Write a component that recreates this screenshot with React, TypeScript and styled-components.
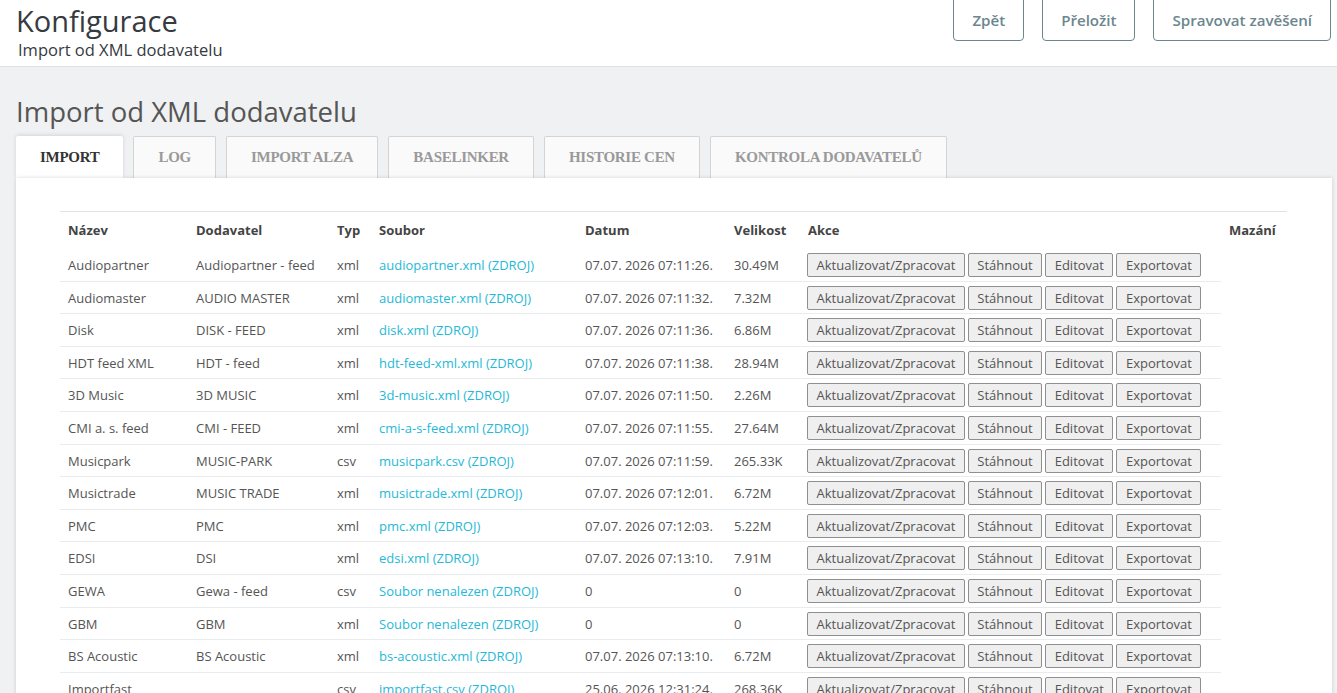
import React from "react";
import styled, { createGlobalStyle } from "styled-components";

const Global = createGlobalStyle`
  html, body { margin: 0; padding: 0; }
  *, *::before, *::after { box-sizing: border-box; }
  body {
    background: #eff1f2;
    font-family: "Open Sans", "Noto Sans", sans-serif;
    color: #555;
    overflow: hidden;
  }
`;

const Page = styled.div`
  width: 1337px;
  height: 693px;
  overflow: hidden;
`;

const Header = styled.header`
  background: #fff;
  height: 67px;
  border-bottom: 1px solid #dfe3e6;
  display: flex;
  justify-content: space-between;
  align-items: flex-start;
  padding: 0 6px 0 16px;
`;

const TitleBlock = styled.div`
  display: flex;
  flex-direction: column;
  padding-top: 2px;
`;

const Title = styled.h1`
  margin: 0;
  font-size: 29px;
  font-weight: 400;
  line-height: 38px;
  color: #363a41;
`;

const Subtitle = styled.div`
  font-size: 16.5px;
  line-height: 20px;
  color: #363a41;
  margin-left: 2px;
`;

const Toolbar = styled.div`
  display: flex;
  gap: 18px;
  margin-top: -4px;
`;

const ToolButton = styled.button`
  height: 45px;
  padding: 2px 18px 0;
  border: 1px solid #6c868e;
  border-radius: 4px;
  background: #fff;
  color: #6c868e;
  font-family: "Open Sans", sans-serif;
  font-weight: 600;
  font-size: 15.1px;
`;

const Main = styled.main`
  padding: 0 5px 0 16px;
`;

const PageHeading = styled.h2`
  margin: 0;
  padding-top: 26px;
  font-size: 27.5px;
  line-height: 38px;
  font-weight: 400;
  color: #555;
`;

const Tabs = styled.nav`
  display: flex;
  gap: 10px;
  margin-top: 5px;
  height: 42px;
  position: relative;
  z-index: 0;
`;

const Tab = styled.div<{ $active?: boolean }>`
  height: 42px;
  padding: 0 24px 0;
  display: flex;
  align-items: center;
  justify-content: center;
  font-family: "Liberation Serif", "Times New Roman", serif;
  font-weight: 700;
  font-size: 15px;
  letter-spacing: -0.28px;
  text-transform: uppercase;
  border: ${(p) => (p.$active ? "none" : "1px solid #d4d4d4")};
  border-bottom: none;
  background: ${(p) => (p.$active ? "#fff" : "#fafafa")};
  color: ${(p) => (p.$active ? "#333" : "#999")};
  border-radius: 2px 2px 0 0;
  box-shadow: ${(p) => (p.$active ? "0 -1px 4px rgba(0,0,0,0.12)" : "none")};
  position: relative;
  z-index: ${(p) => (p.$active ? 2 : 0)};
`;

const Panel = styled.section`
  width: 1316px;
  background: #fff;
  box-shadow: 0 0 4px rgba(0, 0, 0, 0.15);
  padding: 33px 45px 40px 44px;
  position: relative;
  z-index: 1;
`;

const Table = styled.table`
  width: 1227px;
  border-collapse: collapse;
  table-layout: fixed;
  border-top: 1px solid #dfe3e6;
  font-size: 13px;
`;

const Th = styled.th`
  text-align: left;
  font-weight: 700;
  color: #444;
  padding: 0 8px;
  height: 37px;
`;

const Td = styled.td<{ $last?: boolean }>`
  padding: 4px 8px 3.6px;
  height: 32.6px;
  border-bottom: ${(p) => (p.$last ? "none" : "1px solid #e9ecee")};
  white-space: nowrap;
  color: #555;
`;

const Link = styled.a`
  color: #25b9d7;
  text-decoration: none;
`;

const Actions = styled.div`
  display: flex;
  gap: 3px;
  margin-left: -1px;
`;

const ActionButton = styled.button`
  height: 24px;
  padding: 0 8.5px;
  background: #efefef;
  border: 1px solid #8f8f8f;
  border-radius: 2px;
  font-family: "Open Sans", sans-serif;
  font-size: 13px;
  color: #555;
  line-height: 20px;
`;

type Row = [string, string, string, string, string, string];

const rows: Row[] = [
  ["Audiopartner", "Audiopartner - feed", "xml", "audiopartner.xml (ZDROJ)", "07.07. 2026 07:11:26.", "30.49M"],
  ["Audiomaster", "AUDIO MASTER", "xml", "audiomaster.xml (ZDROJ)", "07.07. 2026 07:11:32.", "7.32M"],
  ["Disk", "DISK - FEED", "xml", "disk.xml (ZDROJ)", "07.07. 2026 07:11:36.", "6.86M"],
  ["HDT feed XML", "HDT - feed", "xml", "hdt-feed-xml.xml (ZDROJ)", "07.07. 2026 07:11:38.", "28.94M"],
  ["3D Music", "3D MUSIC", "xml", "3d-music.xml (ZDROJ)", "07.07. 2026 07:11:50.", "2.26M"],
  ["CMI a. s. feed", "CMI - FEED", "xml", "cmi-a-s-feed.xml (ZDROJ)", "07.07. 2026 07:11:55.", "27.64M"],
  ["Musicpark", "MUSIC-PARK", "csv", "musicpark.csv (ZDROJ)", "07.07. 2026 07:11:59.", "265.33K"],
  ["Musictrade", "MUSIC TRADE", "xml", "musictrade.xml (ZDROJ)", "07.07. 2026 07:12:01.", "6.72M"],
  ["PMC", "PMC", "xml", "pmc.xml (ZDROJ)", "07.07. 2026 07:12:03.", "5.22M"],
  ["EDSI", "DSI", "xml", "edsi.xml (ZDROJ)", "07.07. 2026 07:13:10.", "7.91M"],
  ["GEWA", "Gewa - feed", "csv", "Soubor nenalezen (ZDROJ)", "0", "0"],
  ["GBM", "GBM", "xml", "Soubor nenalezen (ZDROJ)", "0", "0"],
  ["BS Acoustic", "BS Acoustic", "xml", "bs-acoustic.xml (ZDROJ)", "07.07. 2026 07:13:10.", "6.72M"],
  ["Importfast", "", "csv", "importfast.csv (ZDROJ)", "25.06. 2026 12:31:24.", "268.36K"],
];

const columns: [string, number][] = [
  ["Název", 128],
  ["Dodavatel", 141],
  ["Typ", 42],
  ["Soubor", 206],
  ["Datum", 149],
  ["Velikost", 74],
  ["Akce", 421],
  ["Mazání", 66],
];

const tabs = ["Import", "Log", "Import Alza", "Baselinker", "Historie cen", "Kontrola dodavatelů"];

export default function App() {
  return (
    <Page>
      <Global />
      <Header>
        <TitleBlock>
          <Title>Konfigurace</Title>
          <Subtitle>Import od XML dodavatelu</Subtitle>
        </TitleBlock>
        <Toolbar>
          <ToolButton>Zpět</ToolButton>
          <ToolButton>Přeložit</ToolButton>
          <ToolButton>Spravovat zavěšení</ToolButton>
        </Toolbar>
      </Header>
      <Main>
        <PageHeading>Import od XML dodavatelu</PageHeading>
        <Tabs>
          {tabs.map((t, i) => (
            <Tab key={t} $active={i === 0}>
              {t}
            </Tab>
          ))}
        </Tabs>
        <Panel>
          <Table>
            <colgroup>
              {columns.map(([c, w]) => (
                <col key={c} style={{ width: w }} />
              ))}
            </colgroup>
            <thead>
              <tr>
                {columns.map(([c]) => (
                  <Th key={c}>{c}</Th>
                ))}
              </tr>
            </thead>
            <tbody>
              {rows.map((r) => (
                <tr key={r[0]}>
                  <Td>{r[0]}</Td>
                  <Td>{r[1]}</Td>
                  <Td>{r[2]}</Td>
                  <Td>
                    <Link href="#">{r[3]}</Link>
                  </Td>
                  <Td>{r[4]}</Td>
                  <Td>{r[5]}</Td>
                  <Td>
                    <Actions>
                      <ActionButton>Aktualizovat/Zpracovat</ActionButton>
                      <ActionButton>Stáhnout</ActionButton>
                      <ActionButton>Editovat</ActionButton>
                      <ActionButton>Exportovat</ActionButton>
                    </Actions>
                  </Td>
                  <Td $last />
                </tr>
              ))}
            </tbody>
          </Table>
        </Panel>
      </Main>
    </Page>
  );
}
